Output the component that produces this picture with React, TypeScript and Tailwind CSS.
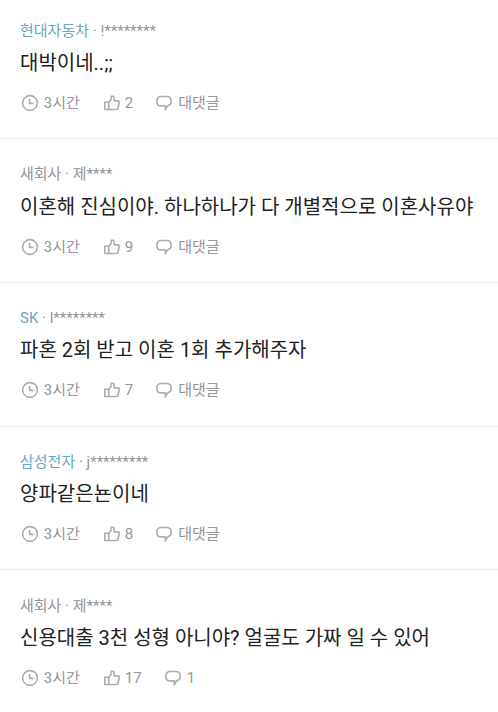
interface IComment {
  id: number;
  company: string;
  verified: boolean;
  nickname: string;
  text: string;
  time: string;
  likes: number;
  replies: number;
}

const comments: IComment[] = [
  {
    id: 1,
    company: "현대자동차",
    verified: true,
    nickname: "!********",
    text: "대박이네..;;",
    time: "3시간",
    likes: 2,
    replies: 0,
  },
  {
    id: 2,
    company: "새회사",
    verified: false,
    nickname: "제****",
    text: "이혼해 진심이야. 하나하나가 다 개별적으로 이혼사유야",
    time: "3시간",
    likes: 9,
    replies: 0,
  },
  {
    id: 3,
    company: "SK",
    verified: true,
    nickname: "l********",
    text: "파혼 2회 받고 이혼 1회 추가해주자",
    time: "3시간",
    likes: 7,
    replies: 0,
  },
  {
    id: 4,
    company: "삼성전자",
    verified: true,
    nickname: "j*********",
    text: "양파같은뇬이네",
    time: "3시간",
    likes: 8,
    replies: 0,
  },
  {
    id: 5,
    company: "새회사",
    verified: false,
    nickname: "제****",
    text: "신용대출 3천 성형 아니야? 얼굴도 가짜 일 수 있어",
    time: "3시간",
    likes: 17,
    replies: 1,
  },
];

const iconClass = "size-5 shrink-0 fill-none stroke-[#adadb0] stroke-[1.6]";

const ClockIcon = () => (
  <svg viewBox="0 0 20 20" className={iconClass}>
    <circle cx="10" cy="10" r="7.4" />
    <path d="M9.6 6v4.4h3.8" />
  </svg>
);

const LikeIcon = () => (
  <svg viewBox="0 0 20 20" className={iconClass} strokeLinejoin="round">
    <path d="M2.8 9.2h3.9v7.3H2.8z" />
    <path d="M6.7 9.2 9.2 6.2V3.4c.9-.7 3-.3 3 1.6v2.9h4.2c.6 0 1 .4.9 1l-1.3 6.6c-.1.6-.5 1-1.2 1H6.7" />
  </svg>
);

const ReplyIcon = () => (
  <svg viewBox="0 0 20 20" className={iconClass} strokeLinejoin="round">
    <path d="M7.4 3.5h5.2c2.7 0 4.6 1.9 4.6 4.7 0 2.4-1.4 4.1-3.6 4.6l-2.3 4v-3.9H7.4c-2.7 0-4.6-1.9-4.6-4.7s1.9-4.7 4.6-4.7z" />
  </svg>
);

interface ICommentItemProps {
  comment: IComment;
}

const CommentItem = ({ comment }: ICommentItemProps) => {
  const { company, verified, nickname, text, time, likes, replies } = comment;

  return (
    <li className="h-[143.75px] border-b border-[#eaebec] px-5 pt-[24.3px] first:h-[139.1px] first:pt-[19.5px]">
      <p className="h-[22px] text-[15px] leading-[22px] text-[#94969b]">
        <span className={verified ? "text-[#6aa5c1]" : ""}>{company}</span>
        {" · "}
        {nickname}
      </p>

      <p className="mt-[6.2px] h-[30px] whitespace-nowrap text-[20px] leading-[30px] text-[#222222]">
        {text}
      </p>

      <div className="mt-[14px] flex h-[22px] items-center text-[15px] leading-[22px] text-[#94969b]">
        <span className="flex items-center gap-[3.8px]">
          <ClockIcon />
          {time}
        </span>
        <span className="ml-[21.8px] flex items-center gap-[3.2px]">
          <LikeIcon />
          {likes}
        </span>
        <button type="button" className="ml-[21px] flex items-center gap-1">
          <ReplyIcon />
          {replies > 0 ? replies : "대댓글"}
        </button>
      </div>
    </li>
  );
};

export default function App() {
  return (
    <ul className="h-[712px] w-full overflow-hidden bg-white font-['Roboto','Noto_Sans_CJK_KR',sans-serif]">
      {comments.map((comment) => (
        <CommentItem key={comment.id} comment={comment} />
      ))}
    </ul>
  );
}
